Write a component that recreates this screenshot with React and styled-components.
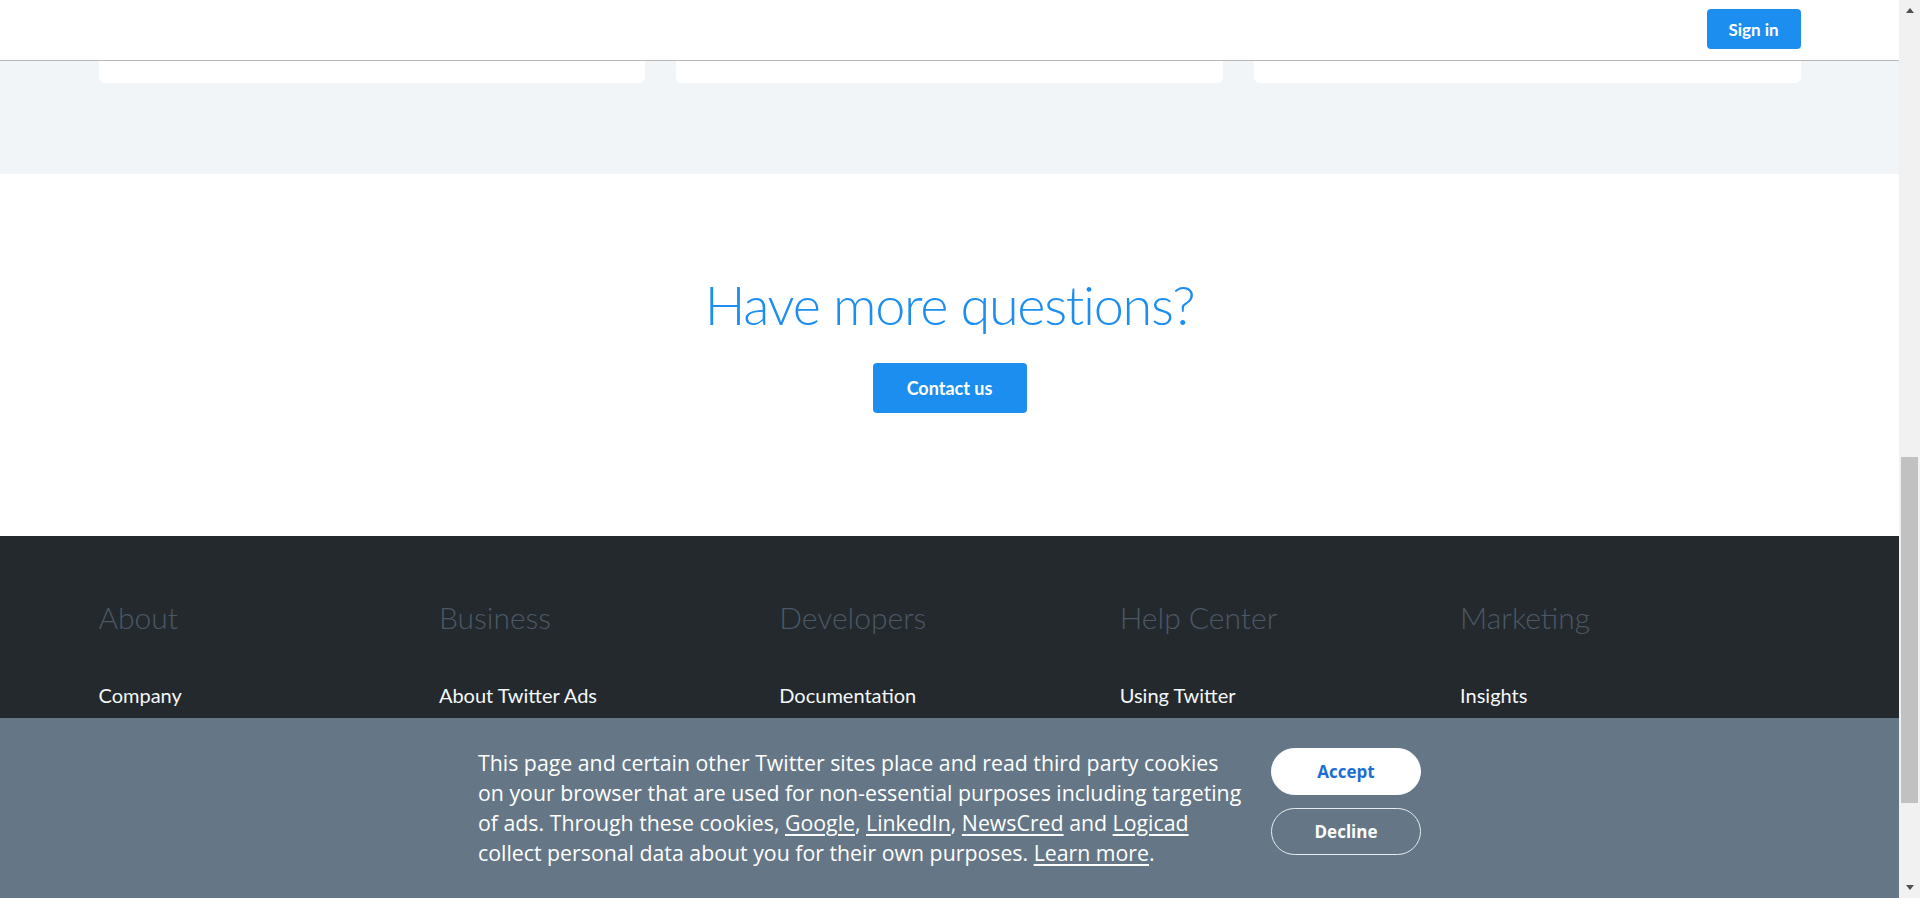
import React, { useLayoutEffect } from "react";
import styled, { createGlobalStyle } from "styled-components";

const GlobalStyle = createGlobalStyle`
  html, body {
    margin: 0;
    padding: 0;
  }
  body {
    font-family: Lato, "Open Sans", sans-serif;
    background: #ffffff;
    color: #14171a;
  }
  * {
    box-sizing: border-box;
  }
`;

// the page leaves room on the right for the scrollbar
const Frame = styled.div`
  margin-right: 21px;
`;

const Container = styled.div`
  width: 1702px;
  margin: 0 auto;
`;

const TopBar = styled.header`
  position: fixed;
  top: 0;
  left: 0;
  right: 21px;
  height: 61px;
  background: #ffffff;
  border-bottom: 1px solid #b9b9b9;
  z-index: 10;
`;

const TopInner = styled(Container)`
  display: flex;
  justify-content: flex-end;
  padding-top: 9px;
`;

const BlueButton = styled.button`
  border: 0;
  border-radius: 4px;
  background: #1c8ef0;
  color: #ffffff;
  font-family: Lato, sans-serif;
  font-weight: 700;
  cursor: pointer;
  width: ${(p) => p.w}px;
  height: ${(p) => p.h}px;
  font-size: ${(p) => p.size}px;
`;

const Page = styled.main`
  padding-top: 60px;
`;

const CardsSection = styled.section`
  background: #f2f5f8;
  padding: 480px 0 91px;
`;

const CardGrid = styled(Container)`
  display: grid;
  grid-template-columns: repeat(3, 1fr);
  column-gap: 31px;
`;

const Card = styled.div`
  height: 688px;
  background: #ffffff;
  border-radius: 6px;
`;

const Questions = styled.section`
  background: #ffffff;
  padding: 99px 0 123px;
  display: flex;
  flex-direction: column;
  align-items: center;
`;

const QuestionsTitle = styled.h2`
  margin: 0 0 25px;
  font-family: Lato, sans-serif;
  font-weight: 300;
  font-size: 54px;
  line-height: 1.2;
  letter-spacing: -1.3px;
  color: #1c8ef0;
`;

const Footer = styled.footer`
  background: #24292d;
  min-height: 568px;
  padding-top: 63px;
`;

const FooterGrid = styled(Container)`
  display: grid;
  grid-template-columns: repeat(5, 1fr);
`;

const FooterCol = styled.div`
  display: flex;
  flex-direction: column;
`;

const FooterHeading = styled.h4`
  margin: 0 0 48px;
  font-family: Lato, sans-serif;
  font-weight: 300;
  font-size: 30px;
  line-height: 1.2;
  color: #4b5866;
`;

const FooterLink = styled.a`
  font-family: Lato, sans-serif;
  font-size: 20px;
  line-height: 24px;
  color: #f5f8fa;
  text-decoration: none;
`;

const CookieBar = styled.div`
  position: fixed;
  left: 0;
  right: 21px;
  bottom: 0;
  height: 180px;
  background: #657786;
  display: flex;
  justify-content: center;
  align-items: center;
  gap: 18px;
  z-index: 20;
`;

const CookieText = styled.p`
  margin: 0;
  width: 775px;
  font-family: "Open Sans", sans-serif;
  font-size: 21.3px;
  line-height: 30px;
  color: #ffffff;
  white-space: nowrap;

  a {
    color: #ffffff;
    text-decoration: underline;
    text-underline-offset: 3px;
  }
`;

const CookieButtons = styled.div`
  display: flex;
  flex-direction: column;
  gap: 13px;
  margin-top: -14px;
`;

const PillButton = styled.button`
  width: 150px;
  height: 47px;
  border-radius: 24px;
  font-family: "Open Sans", sans-serif;
  font-size: 17px;
  font-weight: 700;
  cursor: pointer;
  border: 1px solid ${(p) => (p.primary ? "#ffffff" : "#e6ecf0")};
  background: ${(p) => (p.primary ? "#ffffff" : "transparent")};
  color: ${(p) => (p.primary ? "#1c6fd1" : "#ffffff")};
`;

// drawn browser scrollbar
const ScrollBar = styled.div`
  position: fixed;
  top: 0;
  right: 0;
  bottom: 0;
  width: 21px;
  background: #f1f1f1;
  display: flex;
  flex-direction: column;
  z-index: 30;
`;

const ArrowBox = styled.div`
  height: 21px;
  display: flex;
  align-items: center;
  justify-content: center;
`;

const Arrow = styled.div`
  width: 0;
  height: 0;
  border-left: 4.5px solid transparent;
  border-right: 4.5px solid transparent;
  ${(p) => (p.down ? "border-top: 5px solid #505050;" : "border-bottom: 5px solid #505050;")}
`;

const Track = styled.div`
  flex: 1;
  padding: 436px 2px 0;
`;

const Thumb = styled.div`
  height: 346px;
  background: #c1c1c1;
`;

const footerCols = [
  { title: "About", link: "Company" },
  { title: "Business", link: "About Twitter Ads" },
  { title: "Developers", link: "Documentation" },
  { title: "Help Center", link: "Using Twitter" },
  { title: "Marketing", link: "Insights" },
];

export default function App() {
  useLayoutEffect(() => {
    window.scrollTo(0, 1145);
  }, []);

  return (
    <>
      <GlobalStyle />
      <TopBar>
        <TopInner>
          <BlueButton w={94} h={40} size={17}>Sign in</BlueButton>
        </TopInner>
      </TopBar>

      <Frame>
        <Page>
          <CardsSection>
            <CardGrid>
              <Card />
              <Card />
              <Card />
            </CardGrid>
          </CardsSection>

          <Questions>
            <QuestionsTitle>Have more questions?</QuestionsTitle>
            <BlueButton w={154} h={50} size={18}>Contact us</BlueButton>
          </Questions>

          <Footer>
            <FooterGrid>
              {footerCols.map((col) => (
                <FooterCol key={col.title}>
                  <FooterHeading>{col.title}</FooterHeading>
                  <FooterLink href="#">{col.link}</FooterLink>
                </FooterCol>
              ))}
            </FooterGrid>
          </Footer>
        </Page>
      </Frame>

      <CookieBar>
        <CookieText>
          This page and certain other Twitter sites place and read third party cookies
          <br />
          on your browser that are used for non-essential purposes including targeting
          <br />
          of ads. Through these cookies, <a href="#">Google</a>, <a href="#">LinkedIn</a>,{" "}
          <a href="#">NewsCred</a> and <a href="#">Logicad</a>
          <br />
          collect personal data about you for their own purposes. <a href="#">Learn more</a>.
        </CookieText>
        <CookieButtons>
          <PillButton primary>Accept</PillButton>
          <PillButton>Decline</PillButton>
        </CookieButtons>
      </CookieBar>

      <ScrollBar>
        <ArrowBox>
          <Arrow />
        </ArrowBox>
        <Track>
          <Thumb />
        </Track>
        <ArrowBox>
          <Arrow down />
        </ArrowBox>
      </ScrollBar>
    </>
  );
}
